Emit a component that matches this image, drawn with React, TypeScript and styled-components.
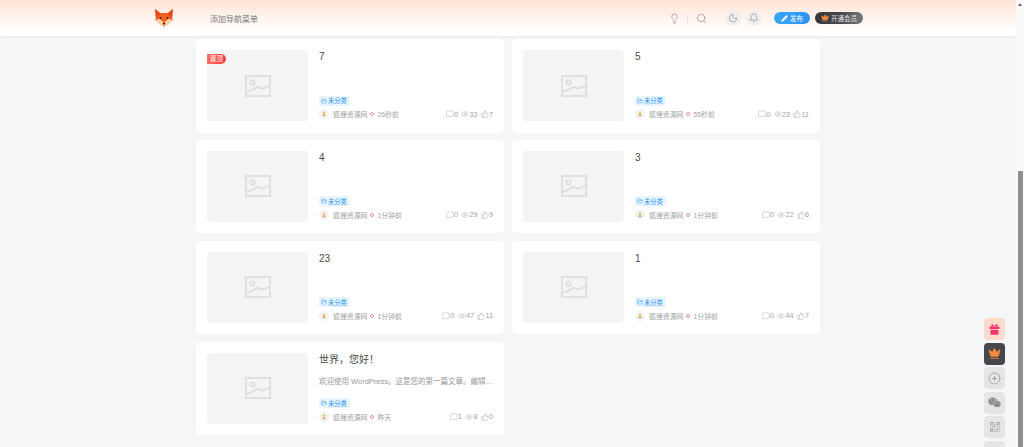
import React from "react";
import styled, { createGlobalStyle } from "styled-components";
import { Lightbulb, Search, Moon, Bell, Pencil, Crown, FolderOpen, MessageSquare, Eye, ThumbsUp, CirclePlus, QrCode } from "lucide-react";
import { FaWeixin } from "react-icons/fa";

const Global = createGlobalStyle`
  html, body { margin: 0; padding: 0; height: 447px; overflow: hidden; background: #f5f6f7; }
  body { font-family: "Liberation Sans", "Noto Sans CJK SC", sans-serif; }
  #root { height: 447px; overflow: hidden; }
`;

const Page = styled.div`
  width: 1016px;
  height: 447px;
  overflow: hidden;
  display: flex;
  flex-direction: column;
`;

const Header = styled.header`
  height: 36px;
  flex: none;
  display: flex;
  align-items: center;
  padding: 0 153px 0 154px;
  background: linear-gradient(180deg, #ffe3d3 0%, #fff3ec 45%, #ffffff 90%);
  box-shadow: 0 1px 3px rgba(0, 0, 0, 0.06);
  position: relative;
  z-index: 2;
`;

const Logo = styled.svg`
  width: 20px;
  height: 20px;
  flex: none;
`;

const NavText = styled.span`
  margin-left: 36px;
  font-size: 8px;
  color: #777;
`;

const HeaderRight = styled.div`
  margin-left: auto;
  display: flex;
  align-items: center;
`;

const PlainIcon = styled.span`
  display: flex;
  color: #85888c;
`;

const Divider = styled.span`
  width: 1px;
  height: 9px;
  margin: 0 7.5px;
  background: #e2e2e2;
`;

const RoundIcon = styled.span<{ $first?: boolean }>`
  width: 16px;
  height: 16px;
  margin-left: ${(p) => (p.$first ? "18.5px" : "5px")};
  border-radius: 50%;
  background: #f1eeec;
  color: #85888c;
  display: flex;
  align-items: center;
  justify-content: center;
`;

const Pill = styled.span<{ $dark?: boolean }>`
  height: 12.5px;
  margin-left: ${(p) => (p.$dark ? "5px" : "12px")};
  width: ${(p) => (p.$dark ? "48px" : "36px")};
  border-radius: 7px;
  display: flex;
  align-items: center;
  justify-content: center;
  gap: 2px;
  font-size: 6.5px;
  color: ${(p) => (p.$dark ? "#e4e4e4" : "#ffffff")};
  background: ${(p) =>
    p.$dark
      ? "linear-gradient(90deg, #35363a 0%, #45464b 50%, #77787c 100%)"
      : "linear-gradient(90deg, #3aa7f5 0%, #2c93f2 100%)"};
`;

const Grid = styled.main`
  width: 624px;
  margin: 3px auto 0;
  display: grid;
  grid-template-columns: 308px 308px;
  grid-auto-rows: 93.5px;
  gap: 7.4px 8px;
`;

const Card = styled.article`
  background: #fff;
  border-radius: 5px;
  padding: 11px;
  display: flex;
  gap: 11px;
  box-sizing: border-box;
  position: relative;
`;

const Thumb = styled.div`
  width: 101px;
  height: 71px;
  flex: none;
  border-radius: 4px;
  background: #f4f4f5;
  display: flex;
  align-items: center;
  justify-content: center;
`;

const Badge = styled.span`
  position: absolute;
  left: 11px;
  top: 15px;
  width: 19px;
  height: 10px;
  border-radius: 1px 5px 5px 1px;
  background: linear-gradient(90deg, #ff6f61, #fb3b3b);
  color: #fff;
  font-size: 6.5px;
  line-height: 10px;
  text-align: center;
`;

const Body = styled.div`
  flex: 1;
  min-width: 0;
  display: flex;
  flex-direction: column;
  padding-bottom: 2px;
`;

const Title = styled.h3`
  margin: 0;
  font-size: 10px;
  line-height: 14px;
  font-weight: 400;
  color: #4a4a4a;
`;

const Excerpt = styled.p`
  margin: 9px 0 0;
  font-size: 7.5px;
  line-height: 11px;
  color: #999;
  white-space: nowrap;
`;

const Tag = styled.span`
  margin-top: auto;
  align-self: flex-start;
  height: 10px;
  padding: 0 2px;
  width: 27px;
  border-radius: 2px;
  background: #e9f4ff;
  color: #2b95f5;
  font-size: 6.3px;
  display: flex;
  align-items: center;
  gap: 1px;
`;

const Meta = styled.div`
  margin-top: 3px;
  height: 11px;
  display: flex;
  align-items: center;
  font-size: 6.9px;
  color: #a2a2a2;
`;

const Avatar = styled.svg`
  width: 10px;
  height: 10px;
  flex: none;
  margin-right: 4px;
`;

const Dot = styled.span`
  width: 2px;
  height: 2px;
  margin: 0 3.5px 0 2.5px;
  border: 1px solid #f08ab0;
  border-radius: 50%;
`;

const Stats = styled.div`
  margin-left: auto;
  display: flex;
  align-items: center;
  gap: 3px;
  font-size: 7.2px;
`;

const Stat = styled.span`
  display: flex;
  align-items: center;
  gap: 0.5px;
`;

const Side = styled.aside`
  position: fixed;
  left: 984px;
  top: 318px;
  display: flex;
  flex-direction: column;
  gap: 2.5px;
`;

const SideBtn = styled.span<{ $bg: string; $fg: string }>`
  width: 21px;
  height: 22px;
  flex: none;
  border-radius: 4px;
  background: ${(p) => p.$bg};
  color: ${(p) => p.$fg};
  display: flex;
  align-items: center;
  justify-content: center;
`;

const ScrollTrack = styled.div`
  position: fixed;
  right: 0;
  top: 0;
  bottom: 0;
  width: 8px;
  background: #fafafa;
`;

const ScrollArrow = styled.span`
  position: absolute;
  left: 1.5px;
  top: 3px;
  border-left: 2.5px solid transparent;
  border-right: 2.5px solid transparent;
  border-bottom: 3px solid #6b6b6b;
`;

const ScrollThumb = styled.div`
  position: absolute;
  top: 171px;
  bottom: 0;
  left: 1.5px;
  width: 5px;
  background: #8f8f8f;
`;

const Fox = () => (
  <Logo viewBox="0 0 20 20">
    <polygon points="1,1 6,5 14,5 19,1 18,10 19,12 10,19 1,12 2,10" fill="#f4601e" />
    <polygon points="1,1 6,5 5,9 2,10" fill="#e64a17" />
    <polygon points="19,1 14,5 15,9 18,10" fill="#e64a17" />
    <polygon points="1,12 6,11 9,14 10,19" fill="#ffd2a8" />
    <polygon points="19,12 14,11 11,14 10,19" fill="#ffd2a8" />
    <circle cx="6.5" cy="10" r="0.9" fill="#3a2415" />
    <circle cx="13.5" cy="10" r="0.9" fill="#3a2415" />
    <polygon points="8.5,15 11.5,15 10,17" fill="#3a2415" />
  </Logo>
);

const GiftIcon = () => (
  <svg width="13" height="13" viewBox="0 0 13 13" fill="#f8346f">
    <rect x="1.5" y="3.5" width="10" height="2.5" rx="0.5" />
    <rect x="2.5" y="6.8" width="8" height="5" rx="0.7" />
    <path d="M6.5 3.2 C5 0.6 2.8 1 3.3 2.4 C3.6 3.1 5 3.3 6.5 3.2 C8 3.3 9.4 3.1 9.7 2.4 C10.2 1 8 0.6 6.5 3.2 Z" />
  </svg>
);

const Placeholder = () => (
  <svg width="26" height="22" viewBox="0 0 26 22" fill="none" stroke="#dedede" strokeWidth="1.8">
    <rect x="1" y="1" width="24" height="20" />
    <circle cx="7.5" cy="7.5" r="2.2" />
    <path d="M1 17 C5 16 8 15 11 12.5 C13.5 10.5 15 14 18 13.5 C20 13 22 11 25 11" />
  </svg>
);

const AvatarIcon = () => (
  <Avatar viewBox="0 0 10 10">
    <circle cx="5" cy="5" r="5" fill="#eff3f5" />
    <rect x="3.7" y="2.8" width="2.6" height="2" rx="1" fill="#e8c24a" />
    <rect x="3.5" y="5.3" width="3" height="2" rx="1" fill="#ef9a5a" />
  </Avatar>
);

type Post = { title: string; time: string; c: number; v: number; l: number; top?: boolean; excerpt?: string };

const posts: Post[] = [
  { title: "7", time: "26秒前", c: 0, v: 33, l: 7, top: true },
  { title: "5", time: "55秒前", c: 0, v: 23, l: 11 },
  { title: "4", time: "1分钟前", c: 0, v: 29, l: 9 },
  { title: "3", time: "1分钟前", c: 0, v: 22, l: 6 },
  { title: "23", time: "1分钟前", c: 0, v: 47, l: 11 },
  { title: "1", time: "1分钟前", c: 0, v: 44, l: 7 },
  { title: "世界，您好！", time: "昨天", c: 1, v: 8, l: 0, excerpt: "欢迎使用 WordPress。这是您的第一篇文章。编辑…" },
];

export default function App() {
  return (
    <Page>
      <Global />
      <Header>
        <Fox />
        <NavText>添加导航菜单</NavText>
        <HeaderRight>
          <PlainIcon><Lightbulb size={11} strokeWidth={1.5} /></PlainIcon>
          <Divider />
          <PlainIcon><Search size={11} strokeWidth={1.5} /></PlainIcon>
          <RoundIcon $first><Moon size={10} strokeWidth={1.5} /></RoundIcon>
          <RoundIcon><Bell size={10} strokeWidth={1.5} /></RoundIcon>
          <Pill><Pencil size={7} fill="#fff" strokeWidth={2} />发布</Pill>
          <Pill $dark><Crown size={8} color="#f58a3c" fill="#f58a3c" />开通会员</Pill>
        </HeaderRight>
      </Header>
      <Grid>
        {posts.map((p) => (
          <Card key={p.title}>
            <Thumb><Placeholder /></Thumb>
            {p.top && <Badge>置顶</Badge>}
            <Body>
              <Title>{p.title}</Title>
              {p.excerpt && <Excerpt>{p.excerpt}</Excerpt>}
              <Tag><FolderOpen size={6} strokeWidth={1.8} />未分类</Tag>
              <Meta>
                <AvatarIcon />
                狐狸资源网
                <Dot />
                {p.time}
                <Stats>
                  <Stat><MessageSquare size={8} strokeWidth={1.3} />{p.c}</Stat>
                  <Stat><Eye size={8} strokeWidth={1.3} />{p.v}</Stat>
                  <Stat><ThumbsUp size={8} strokeWidth={1.3} />{p.l}</Stat>
                </Stats>
              </Meta>
            </Body>
          </Card>
        ))}
      </Grid>
      <Side>
        <SideBtn $bg="#fbdccb" $fg="#f8346f"><GiftIcon /></SideBtn>
        <SideBtn $bg="#46474c" $fg="#f58a3c"><Crown size={13} fill="#f58a3c" strokeWidth={1.5} /></SideBtn>
        <SideBtn $bg="#e4e5e6" $fg="#8d8d8d"><CirclePlus size={13} strokeWidth={1.3} /></SideBtn>
        <SideBtn $bg="#e4e5e6" $fg="#8d8d8d"><FaWeixin size={13} /></SideBtn>
        <SideBtn $bg="#e4e5e6" $fg="#8d8d8d"><QrCode size={12} strokeWidth={1.5} /></SideBtn>
        <SideBtn $bg="#e4e5e6" $fg="#8d8d8d" />
      </Side>
      <ScrollTrack>
        <ScrollArrow />
        <ScrollThumb />
      </ScrollTrack>
    </Page>
  );
}
